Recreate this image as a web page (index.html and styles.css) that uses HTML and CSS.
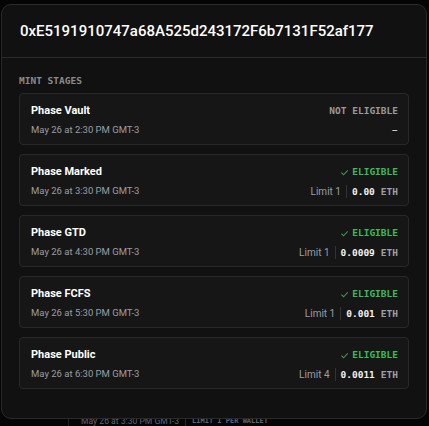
FILE: index.html
```html
<!DOCTYPE html>
<html lang="en">
<head>
    <meta charset="UTF-8">
    <meta name="viewport" content="width=device-width, initial-scale=1.0">
    <title>Mint Stages</title>
    <link rel="stylesheet" href="styles.css">
</head>
<body>
    <div class="backdrop">
        <div class="bg-row">
            <span class="bg-date">May 26 at 3:30 PM GMT-3</span>
            <span class="bg-limit">LIMIT 1 PER WALLET</span>
        </div>
    </div>

    <div class="modal">
        <div class="modal-header">
            <h2>0xE5191910747a68A525d243172F6b7131F52af177</h2>
        </div>
        <div class="stages">
            <div class="section-label">MINT STAGES</div>

            <div class="stage">
                <div class="stage-info">
                    <div class="stage-name">Phase Vault</div>
                    <div class="stage-date">May 26 at 2:30 PM GMT-3</div>
                </div>
                <div class="stage-status">
                    <div class="status not-eligible">NOT ELIGIBLE</div>
                    <div class="price-row"><span class="dash">&ndash;</span></div>
                </div>
            </div>

            <div class="stage">
                <div class="stage-info">
                    <div class="stage-name">Phase Marked</div>
                    <div class="stage-date">May 26 at 3:30 PM GMT-3</div>
                </div>
                <div class="stage-status">
                    <div class="status eligible"><svg class="check" viewBox="0 0 10 10"><path d="M1.5 5.2 L4 7.5 L8.6 2.6"/></svg>ELIGIBLE</div>
                    <div class="price-row"><span class="limit">Limit 1</span><span class="price">0.00</span><span class="unit">ETH</span></div>
                </div>
            </div>

            <div class="stage">
                <div class="stage-info">
                    <div class="stage-name">Phase GTD</div>
                    <div class="stage-date">May 26 at 4:30 PM GMT-3</div>
                </div>
                <div class="stage-status">
                    <div class="status eligible"><svg class="check" viewBox="0 0 10 10"><path d="M1.5 5.2 L4 7.5 L8.6 2.6"/></svg>ELIGIBLE</div>
                    <div class="price-row"><span class="limit">Limit 1</span><span class="price">0.0009</span><span class="unit">ETH</span></div>
                </div>
            </div>

            <div class="stage">
                <div class="stage-info">
                    <div class="stage-name">Phase FCFS</div>
                    <div class="stage-date">May 26 at 5:30 PM GMT-3</div>
                </div>
                <div class="stage-status">
                    <div class="status eligible"><svg class="check" viewBox="0 0 10 10"><path d="M1.5 5.2 L4 7.5 L8.6 2.6"/></svg>ELIGIBLE</div>
                    <div class="price-row"><span class="limit">Limit 1</span><span class="price">0.001</span><span class="unit">ETH</span></div>
                </div>
            </div>

            <div class="stage">
                <div class="stage-info">
                    <div class="stage-name">Phase Public</div>
                    <div class="stage-date">May 26 at 6:30 PM GMT-3</div>
                </div>
                <div class="stage-status">
                    <div class="status eligible"><svg class="check" viewBox="0 0 10 10"><path d="M1.5 5.2 L4 7.5 L8.6 2.6"/></svg>ELIGIBLE</div>
                    <div class="price-row"><span class="limit">Limit 4</span><span class="price">0.0011</span><span class="unit">ETH</span></div>
                </div>
            </div>
        </div>
    </div>
</body>
</html>
```

FILE: styles.css
```css
body {
    margin: 0;
    padding: 0;
    background-color: #050505;
    font-family: Roboto, "Liberation Sans", sans-serif;
    color: #fff;
    height: 426px;
    overflow: hidden;
}
.backdrop {
    padding-top: 414px;
    padding-left: 68px;
}
.bg-row {
    display: flex;
    align-items: center;
    height: 14px;
    border-left: 1px solid #222;
    padding-left: 12px;
}
.bg-date {
    font-size: 8.6px;
    color: #5f6675;
    padding-right: 6px;
    border-right: 1px solid #2a2a2a;
}
.bg-limit {
    font-family: "DejaVu Sans Mono", monospace;
    font-size: 7px;
    font-weight: bold;
    color: #5f6675;
    padding-left: 6px;
}
.modal {
    position: absolute;
    left: 1px;
    top: 4px;
    width: 424px;
    height: 413px;
    background-color: #111;
    border: 1px solid #2a2a2a;
    border-radius: 10px;
}
.modal-header {
    height: 52px;
    padding: 0 18px;
    display: flex;
    align-items: center;
    border-bottom: 1px solid #2a2a2a;
}
h2 {
    margin: 0;
    font-size: 15px;
    font-weight: 500;
    color: #fff;
}
.stages {
    padding: 17px 17px 0 17px;
}
.section-label {
    font-family: "DejaVu Sans Mono", monospace;
    font-size: 9.5px;
    font-weight: bold;
    color: #8a8a8a;
    line-height: 12px;
    margin-bottom: 6px;
}
.stage {
    box-sizing: border-box;
    height: 52px;
    display: flex;
    justify-content: space-between;
    align-items: center;
    padding: 3px 10px 0 11px;
    background-color: #161616;
    border: 1px solid #282828;
    border-radius: 4px;
    margin-bottom: 9px;
}
.stage-info,
.stage-status {
    display: flex;
    flex-direction: column;
    gap: 5px;
}
.stage-status {
    align-items: flex-end;
}
.stage-name {
    font-size: 11px;
    font-weight: 700;
    line-height: 14px;
    color: #fff;
}
.stage-date {
    font-size: 9.5px;
    line-height: 14px;
    color: #9a9ea4;
}
.status {
    font-family: "DejaVu Sans Mono", monospace;
    font-size: 9.5px;
    font-weight: bold;
    line-height: 14px;
    display: flex;
    align-items: center;
}
.not-eligible {
    color: #9a9a9a;
}
.eligible {
    color: #3dbb5c;
}
.check {
    width: 9px;
    height: 9px;
    margin-right: 3px;
    fill: none;
    stroke: #3a9a50;
    stroke-width: 1.2;
}
.price-row {
    display: flex;
    align-items: center;
    height: 14px;
}
.dash {
    font-size: 10px;
    color: #ddd;
}
.limit {
    font-size: 10px;
    color: #9a9ea4;
    padding-right: 5px;
    border-right: 1px solid #333;
    line-height: 13px;
}
.price {
    font-family: "DejaVu Sans Mono", monospace;
    font-size: 9.5px;
    font-weight: bold;
    color: #f2f2f2;
    padding-left: 5px;
}
.unit {
    font-family: "DejaVu Sans Mono", monospace;
    font-size: 9.5px;
    font-weight: bold;
    color: #a0a0a0;
    padding-left: 6px;
}
```
